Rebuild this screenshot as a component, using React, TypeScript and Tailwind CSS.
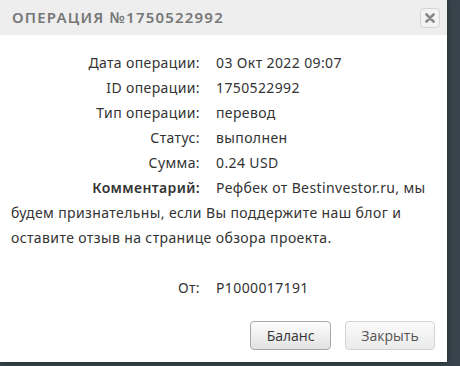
export default function App() {
    const rows: [string, string][] = [
        ["Дата операции:", "03 Окт 2022 09:07"],
        ["ID операции:", "1750522992"],
        ["Тип операции:", "перевод"],
        ["Статус:", "выполнен"],
        ["Сумма:", "0.24 USD"],
    ]

    const labelClassName = "inline-block w-[205px] pr-[16px] text-right align-top"

    return (
        <div className="w-[460px] h-[366px] bg-[#37444b] overflow-hidden">
            <div className="w-[447px] h-[362px] bg-white flex flex-col shadow-[0_0_6px_rgba(0,0,0,0.4)]">
                <div className="h-[35px] bg-[#eeeeee] flex items-center justify-between pl-3 pr-[7px]">
                    <h1 className="text-[15px] font-semibold tracking-[1.2px] text-[#777] font-['Noto_Sans',sans-serif]">
                        ОПЕРАЦИЯ №1750522992
                    </h1>
                    <button className="w-[20px] h-[20px] rounded border border-[#d4d4d4] bg-[#f3f3f3] flex items-center justify-center">
                        <svg width="10" height="10" viewBox="0 0 10 10">
                            <path d="M1.5 1.5 L8.5 8.5 M8.5 1.5 L1.5 8.5" stroke="#888" strokeWidth="2.6" strokeLinecap="round" />
                        </svg>
                    </button>
                </div>
                <div className="pt-[15px] pl-[11px] pr-[15px] text-[14px] leading-[25px] tracking-[0.38px] text-[#333] font-['Noto_Sans',sans-serif]">
                    {rows.map(([label, value]) => (
                        <p key={label}>
                            <span className={labelClassName}>{label}</span>
                            {value}
                        </p>
                    ))}
                    <p>
                        <span className={`${labelClassName} font-semibold`}>Комментарий:</span>
                        Рефбек от Bestinvestor.ru, мы будем признательны, если Вы поддержите наш блог и оставите отзыв на странице обзора проекта.
                    </p>
                    <p className="mt-[25px]">
                        <span className={labelClassName}>От:</span>
                        P1000017191
                    </p>
                </div>
                <div className="mt-auto mb-[12px] flex justify-end gap-[14px] pr-[12px] font-['Open_Sans',sans-serif] text-[14px]">
                    <button className="w-[81px] h-[29px] rounded-[4px] border border-[#a8a8a8] bg-gradient-to-b from-[#fdfdfd] to-[#e2e2e2] text-[#333]">
                        Баланс
                    </button>
                    <button className="w-[90px] h-[29px] rounded-[4px] border border-[#d3d3d3] bg-gradient-to-b from-[#fafafa] to-[#ebebeb] text-[#555]">
                        Закрыть
                    </button>
                </div>
            </div>
        </div>
    )
}
